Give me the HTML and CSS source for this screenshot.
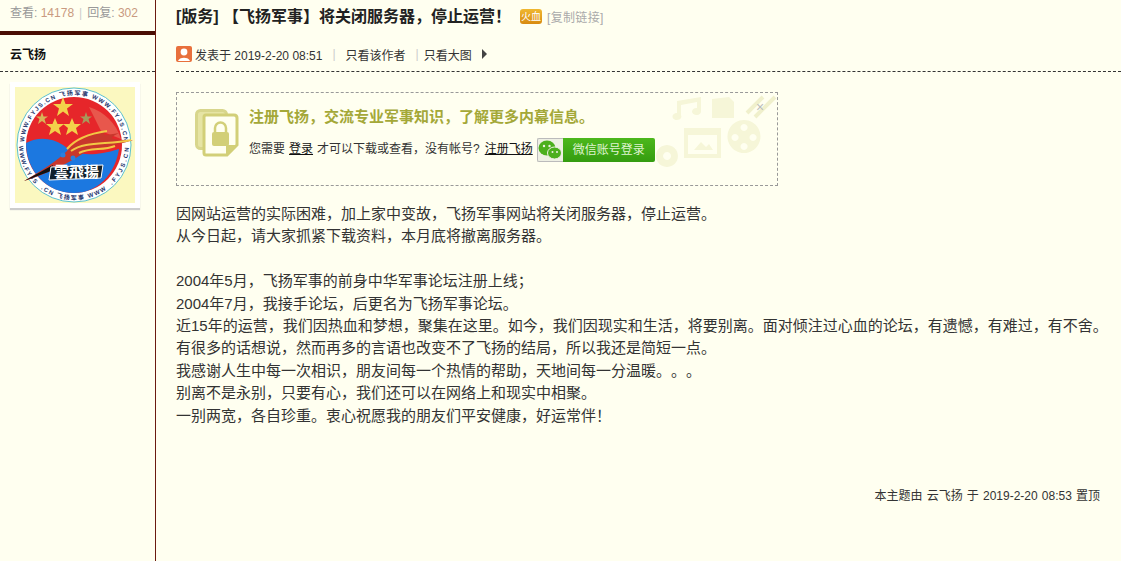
FILE: index.html
```html
<!DOCTYPE html>
<html lang="zh-CN">
<head>
    <meta charset="UTF-8">
    <meta name="viewport" content="width=device-width, initial-scale=1.0">
    <title>将关闭服务器，停止运营！</title>
    <link rel="stylesheet" href="styles.css">
</head>
<body>
<div class="thread">
    <aside class="side">
        <div class="stats">
            <span>查看:</span> <span class="num">14178</span><span class="pipe">|</span><span>回复:</span> <span class="num">302</span>
        </div>
        <div class="author">云飞扬</div>
        <div class="avatar">
            <svg class="logo" viewBox="0 0 120 116" width="120" height="116">
                <defs>
                    <path id="ring-top" d="M9 58 A50 50 0 0 1 109 58"/>
                    <path id="ring-left" d="M4 58 A55 55 0 0 0 22 98.700"/>
                    <path id="ring-bottom" d="M25 101.200 A55 55 0 0 0 93 101.200"/>
                    <path id="ring-right" d="M96 98.700 A55 55 0 0 0 114 58"/>
                </defs>
                <rect width="120" height="116" fill="#fbf8c0"/>
                <circle cx="59" cy="58" r="57" fill="#fff" stroke="#5cc0cc" stroke-width="1"/>
                <text class="ring-text" textLength="150" lengthAdjust="spacing"><textPath href="#ring-top" startOffset="3">WWW.FYJS.CN 飞扬军事 WWW.FYJS.CN</textPath></text>
                <text class="ring-text" textLength="42" lengthAdjust="spacing"><textPath href="#ring-left" startOffset="1">WWW.FYJS</textPath></text>
                <text class="ring-text" textLength="70" lengthAdjust="spacing"><textPath href="#ring-bottom" startOffset="1">.CN 飞扬军事 WWW</textPath></text>
                <text class="ring-text" textLength="42" lengthAdjust="spacing"><textPath href="#ring-right" startOffset="1">.FYJS.CN</textPath></text>
                <circle cx="59" cy="58" r="48" fill="#e6262a"/>
                <path d="M11 56 C22 50 36 50 48 58 C58 66 72 72 104 62 C100 88 82 106 59 106 C32 106 11 84 11 56 Z" fill="#1c78e0"/>
                <path d="M74 20 A48 48 0 0 1 106 52 L86 44 Z" fill="#e8574c"/>
                <path d="M9 94 C26 84 42 74 52 64 C58 56 76 46 92 44 C86 48 88 49 104 46 C94 51 92 53 118 53 C98 60 84 60 72 64 C60 72 36 86 9 94 Z" fill="#c8372c"/>
                <path d="M52 62 C62 50 78 46 92 44 M56 64 C70 54 92 58 116 53 M64 66 C76 60 88 64 100 59" fill="none" stroke="#f2c844" stroke-width="2"/>
                <path d="M9 94 L38 78 L36 84 Z" fill="#111"/>
                <circle cx="48" cy="68" r="2.500" fill="#2a80e0"/>
                <circle cx="58" cy="71" r="2.500" fill="#2a80e0"/>
                <polygon points="48,10 50.500,17 58,17 52,21.500 54,29 48,24.500 42,29 44,21.500 38,17 45.500,17" fill="#f3d14a"/>
                <polygon points="27,25 28.500,29.500 33,29.500 29.500,32 31,37 27,34 23,37 24.500,32 21,29.500 25.500,29.500" fill="#d8b458"/>
                <polygon points="40,31 42.500,37 49,37 44,41 46,48 40,44 34,48 36,41 31,37 37.500,37" fill="#f3d14a"/>
                <polygon points="57,31 59.500,37 66,37 61,41 63,48 57,44 51,48 53,41 48,37 54.500,37" fill="#f3d14a"/>
                <polygon points="71,25 72.500,29.500 77,29.500 73.500,32 75,37 71,34 67,37 68.500,32 65,29.500 69.500,29.500" fill="#a8985a"/>
                <polygon points="36,80 88,78 86,91 34,93" fill="#10202c" stroke="#fff" stroke-width="1"/>
                <text x="39" y="90" class="logo-text">雲飛揚</text>
            </svg>
        </div>
    </aside>
    <main class="content">
        <header class="head">
            <h1 class="title">[版务] 【飞扬军事】将关闭服务器，停止运营！</h1>
            <span class="hot">火血</span>
            <a class="copy">[复制链接]</a>
        </header>
        <div class="meta">
            <svg class="user-ico" viewBox="0 0 16 16" width="16" height="16">
                <rect width="16" height="16" rx="2" fill="#e8703c"/>
                <circle cx="8" cy="6" r="3.400" fill="#fff"/>
                <path d="M2 15 C3 10.500 13 10.500 14 15 Z" fill="#fff"/>
            </svg>
            <span class="date">发表于 2019-2-20 08:51</span>
            <span class="pipe">|</span>
            <a>只看该作者</a>
            <span class="pipe narrow">|</span>
            <a>只看大图</a>
            <span class="arrow"></span>
        </div>
        <div class="locked">
            <svg class="deco" viewBox="0 0 130 90" width="130" height="90">
                <g fill="#f6f6d8">
                    <path d="M30 20 V8 L54 4 V18 A4.500 3.500 0 1 1 50 15 V9 L34 12 V22 A4.500 3.500 0 1 1 30 20 Z"/>
                    <path d="M65 6 L82 4 L87 9 V25 H65 Z"/>
                    <path d="M37 35 H74 V65 H37 Z M41 42 V61 H70 V42 Z" fill-rule="evenodd"/>
                    <path d="M47 57 L54 49 L59 54 L62 51 L66 57 Z"/>
                    <path d="M97 27 A16.500 16.500 0 1 1 96.900 27 Z M97 31 A3.500 3.500 0 1 0 97.100 31 Z M88 41 A3.500 3.500 0 1 0 88.100 41 Z M106 41 A3.500 3.500 0 1 0 106.100 41 Z M97 50 A3.500 3.500 0 1 0 97.100 50 Z" fill-rule="evenodd"/>
                    <path d="M20 52 A11 11 0 1 1 19.900 52 Z M20 59 A4 4 0 1 0 20.100 59 Z" fill-rule="evenodd"/>
                </g>
                <path d="M100 20 L116 4 M108 24 L128 4" stroke="#f0f0cc" stroke-width="4"/>
                <text x="109" y="19" class="deco-x">×</text>
            </svg>
            <svg class="lock-ico" viewBox="0 0 44 48" width="44" height="48">
                <rect x="1.500" y="1.500" width="30" height="38" rx="4" fill="#e6e4a4" stroke="#d8d68c" stroke-width="3"/>
                <path d="M11 6 H39 Q42 6 42 9 V36 L32 46 H11 Q9 46 9 44 V8 Q9 6 11 6 Z" fill="#fffff0" stroke="#d2cf78" stroke-width="3"/>
                <path d="M31 46 V36 H42 Z" fill="#d2cf78"/>
                <rect x="17" y="23" width="17" height="14" rx="2" fill="#d2cf78"/>
                <path d="M20 23 V19 A5.500 5.500 0 0 1 31 19 V23" fill="none" stroke="#d2cf78" stroke-width="2.500"/>
            </svg>
            <div class="locked-body">
                <p class="lead">注册飞扬，交流专业军事知识，了解更多内幕信息。</p>
                <div class="login-row">
                    <span>您需要</span> <a class="ul">登录</a> <span class="need">才可以下载或查看，没有帐号?</span> <a class="ul">注册飞扬</a>
                    <a class="wx">
                        <span class="wx-ico">
                            <svg viewBox="0 0 24 22" width="24" height="22">
                                <ellipse cx="9" cy="9" rx="8.500" ry="7.500" fill="#4caf1e"/>
                                <ellipse cx="16.500" cy="14" rx="7" ry="6" fill="#4caf1e" stroke="#eef0e4" stroke-width="1"/>
                                <circle cx="6" cy="7" r="1.200" fill="#eef0e4"/>
                                <circle cx="11.500" cy="7" r="1.200" fill="#eef0e4"/>
                                <circle cx="14.500" cy="13" r="1" fill="#eef0e4"/>
                                <circle cx="19" cy="13" r="1" fill="#eef0e4"/>
                            </svg>
                        </span>
                        <span class="wx-txt">微信账号登录</span>
                    </a>
                </div>
            </div>
        </div>
        <div class="post">
            <p>因网站运营的实际困难，加上家中变故，飞扬军事网站将关闭服务器，停止运营。</p>
            <p>从今日起，请大家抓紧下载资料，本月底将撤离服务器。</p>
            <p>&nbsp;</p>
            <p>2004年5月，飞扬军事的前身中华军事论坛注册上线；</p>
            <p>2004年7月，我接手论坛，后更名为飞扬军事论坛。</p>
            <p>近15年的运营，我们因热血和梦想，聚集在这里。如今，我们因现实和生活，将要别离。面对倾注过心血的论坛，有遗憾，有难过，有不舍。</p>
            <p>有很多的话想说，然而再多的言语也改变不了飞扬的结局，所以我还是简短一点。</p>
            <p>我感谢人生中每一次相识，朋友间每一个热情的帮助，天地间每一分温暖。。。</p>
            <p>别离不是永别，只要有心，我们还可以在网络上和现实中相聚。</p>
            <p>一别两宽，各自珍重。衷心祝愿我的朋友们平安健康，好运常伴！</p>
        </div>
        <div class="sticky">本主题由 云飞扬 于 2019-2-20 08:53 置顶</div>
    </main>
</div>
</body>
</html>
```

FILE: styles.css
```css
* { box-sizing: border-box; }
html, body { margin: 0; height: 100%; overflow: hidden; }
body { background: #fffff0; color: #333; font: 12px "Liberation Sans", "Noto Sans CJK SC", sans-serif; }
p, h1 { margin: 0; }
.thread { display: grid; grid-template-columns: 156px 1fr; height: 561px; }

.side { border-right: 1px solid #6b1a10; }
.stats { height: 35px; padding: 6px 0 0 10px; border-bottom: 4px solid #4a0e04; color: #999; line-height: 14px; white-space: nowrap; }
.stats .num { color: #c99a80; }
.stats .pipe { margin: 0 5px; color: #ccc; }
.author { height: 37px; padding: 12px 0 0 10px; border-bottom: 1px dashed #333; font-weight: bold; color: #111; line-height: 16px; }
.avatar { width: 130px; margin: 10px 0 0 10px; padding: 5px; background: #fff; box-shadow: 0 2px 1px #ccc; }
.logo { display: block; }
.logo-text { font-size: 15px; font-weight: bold; fill: #fff; }
.ring-text { font-size: 6px; font-weight: bold; fill: #24346c; }

.content { padding: 0 21px 0 20px; min-width: 0; }
.head { display: flex; align-items: center; height: 33px; }
.title { font-size: 16px; font-weight: bold; color: #222; line-height: 33px; white-space: nowrap; }
.hot { width: 22px; height: 15px; margin-left: 9px; border-radius: 3px; background: linear-gradient(#f0b830, #d88a10); color: #fff; font-size: 10px; line-height: 15px; text-align: center; }
.copy { margin-left: 5px; color: #aaa; letter-spacing: 0.300px; }
.meta { display: flex; align-items: center; height: 39px; padding-top: 4px; margin-right: -21px; border-bottom: 1px dashed #333; color: #333; }
.user-ico { margin-right: 3px; }
.meta .pipe { margin: 0 10px; color: #ccc; }
.meta .pipe.narrow { margin: 0 5px 0 10px; }
.arrow { width: 0; height: 0; margin-left: 10px; border-left: 5px solid #444; border-top: 5px solid transparent; border-bottom: 5px solid transparent; }

.locked { position: relative; display: flex; width: 602px; height: 94px; margin-top: 20px; padding: 16px 0 0 18px; border: 1px dashed #999; overflow: hidden; }
.deco { position: absolute; right: 0; top: 0; }
.deco-x { font-size: 14px; fill: #bbb; }
.lock-ico { flex: none; margin-right: 10px; }
.locked-body { position: relative; }
.lead { font-size: 15px; font-weight: bold; color: #a4a838; line-height: 16px; white-space: nowrap; }
.login-row { display: flex; align-items: flex-start; gap: 4px; margin-top: 13px; height: 24px; line-height: 22px; white-space: nowrap; }
.need { margin-right: 1px; }
.ul { color: #111; text-decoration: underline; }
.wx { display: flex; height: 24px; }
.wx-ico { display: flex; align-items: center; justify-content: center; width: 26px; border: 1px solid #bbb; border-right: 0; border-radius: 2px 0 0 2px; background: #eef0e4; }
.wx-txt { width: 92px; background: linear-gradient(#4cb81c, #349c10); border-radius: 0 2px 2px 0; color: #dff3cf; line-height: 24px; text-align: center; }

.post { margin-top: 17px; font-size: 15px; line-height: 22.400px; color: #333; white-space: nowrap; text-spacing-trim: space-all; }
.sticky { margin-top: 59px; text-align: right; color: #333; word-spacing: 0.800px; }
```
